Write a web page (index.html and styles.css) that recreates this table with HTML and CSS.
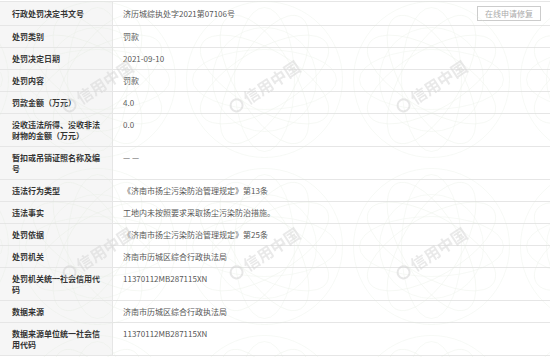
FILE: index.html
```html
<!DOCTYPE html>
<html lang="zh-CN">
<head>
<meta charset="utf-8">
<title>行政处罚信息</title>
<link rel="stylesheet" href="styles.css">
</head>
<body>
<div class="page">
  <table class="info">
    <tbody>
      <tr class="first">
        <th>行政处罚决定书文号</th>
        <td><div class="with-btn"><span>济历城综执处字2021第07106号</span><button class="repair" type="button">在线申请修复</button></div></td>
      </tr>
      <tr><th>处罚类别</th><td>罚款</td></tr>
      <tr><th>处罚决定日期</th><td>2021-09-10</td></tr>
      <tr><th>处罚内容</th><td>罚款</td></tr>
      <tr><th>罚款金额（万元）</th><td>4.0</td></tr>
      <tr><th>没收违法所得、没收非法财物的金额（万元）</th><td>0.0</td></tr>
      <tr><th>暂扣或吊销证照名称及编号</th><td>— —</td></tr>
      <tr><th>违法行为类型</th><td>《济南市扬尘污染防治管理规定》第13条</td></tr>
      <tr><th>违法事实</th><td>工地内未按照要求采取扬尘污染防治措施。</td></tr>
      <tr><th>处罚依据</th><td>《济南市扬尘污染防治管理规定》第25条</td></tr>
      <tr><th>处罚机关</th><td>济南市历城区综合行政执法局</td></tr>
      <tr><th>处罚机关统一社会信用代码</th><td>11370112MB287115XN</td></tr>
      <tr><th>数据来源</th><td>济南市历城区综合行政执法局</td></tr>
      <tr><th>数据来源单位统一社会信用代码</th><td>11370112MB287115XN</td></tr>
    </tbody>
  </table>
  <svg class="watermark" width="550" height="357" aria-hidden="true">
    <defs>
      <pattern id="wm" patternUnits="userSpaceOnUse" x="14" y="-4" width="167" height="167">
        <g fill="none" stroke="#dce6d8" stroke-width="0.5" opacity="0.5">
          <ellipse cx="83.5" cy="83.5" rx="72" ry="30" transform="rotate(0 83.5 83.5)"/>
          <ellipse cx="83.5" cy="83.5" rx="72" ry="30" transform="rotate(30 83.5 83.5)"/>
          <ellipse cx="83.5" cy="83.5" rx="72" ry="30" transform="rotate(60 83.5 83.5)"/>
          <ellipse cx="83.5" cy="83.5" rx="72" ry="30" transform="rotate(90 83.5 83.5)"/>
          <ellipse cx="83.5" cy="83.5" rx="72" ry="30" transform="rotate(120 83.5 83.5)"/>
          <ellipse cx="83.5" cy="83.5" rx="72" ry="30" transform="rotate(150 83.5 83.5)"/>
          <circle cx="83.5" cy="83.5" r="52"/>
          <circle cx="83.5" cy="83.5" r="78"/>
        </g>
        <g transform="rotate(-33 83.5 83.5)" opacity="0.5">
          <circle cx="46" cy="90" r="6" fill="none" stroke="#d0d0d0" stroke-width="2"/>
          <text x="56" y="96" class="wm-text">信用中国</text>
        </g>
      </pattern>
    </defs>
    <rect width="550" height="357" fill="url(#wm)"/>
  </svg>
</div>
</body>
</html>
```

FILE: styles.css
```css
html, body {
  margin: 0;
  padding: 0;
  background: #ffffff;
}

body {
  font-family: "Noto Sans CJK SC", "Noto Sans", "Liberation Sans", sans-serif;
  font-size: 8px;
  line-height: 11px;
  color: #555555;
}

.page {
  position: relative;
  width: 550px;
  height: 357px;
  padding-top: 1px;
  box-sizing: border-box;
  overflow: hidden;
}

.info {
  width: 550px;
  border-collapse: collapse;
  table-layout: fixed;
}

.info th,
.info td {
  border-top: 1px solid #e6e6e6;
  border-bottom: 1px solid #e6e6e6;
  vertical-align: top;
  text-align: left;
  padding: 5px 10px;
}

.info th {
  width: 90px;
  padding-left: 12px;
  padding-right: 10px;
  background: #f6f6f6;
  color: #333333;
  font-weight: bold;
  border-right: 1px solid #e6e6e6;
}

.info td {
  color: #555555;
  background: transparent;
}

.info tr.first th,
.info tr.first td {
  padding-top: 4px;
  padding-bottom: 4px;
  line-height: 15px;
}

.with-btn {
  display: flex;
  align-items: center;
  justify-content: space-between;
}

.repair {
  height: 15px;
  margin: 0 -1px 0 0;
  padding: 0 7px;
  border: 1px solid #cccccc;
  background: #ffffff;
  color: #aaaaaa;
  font-family: inherit;
  font-size: 8px;
  line-height: 13px;
  border-radius: 0;
}

.watermark {
  position: absolute;
  left: 0;
  top: 0;
  pointer-events: none;
}

.wm-text {
  font-family: "Noto Sans CJK SC", sans-serif;
  font-size: 16px;
  font-weight: bold;
  fill: #d4d4d4;
}
```
